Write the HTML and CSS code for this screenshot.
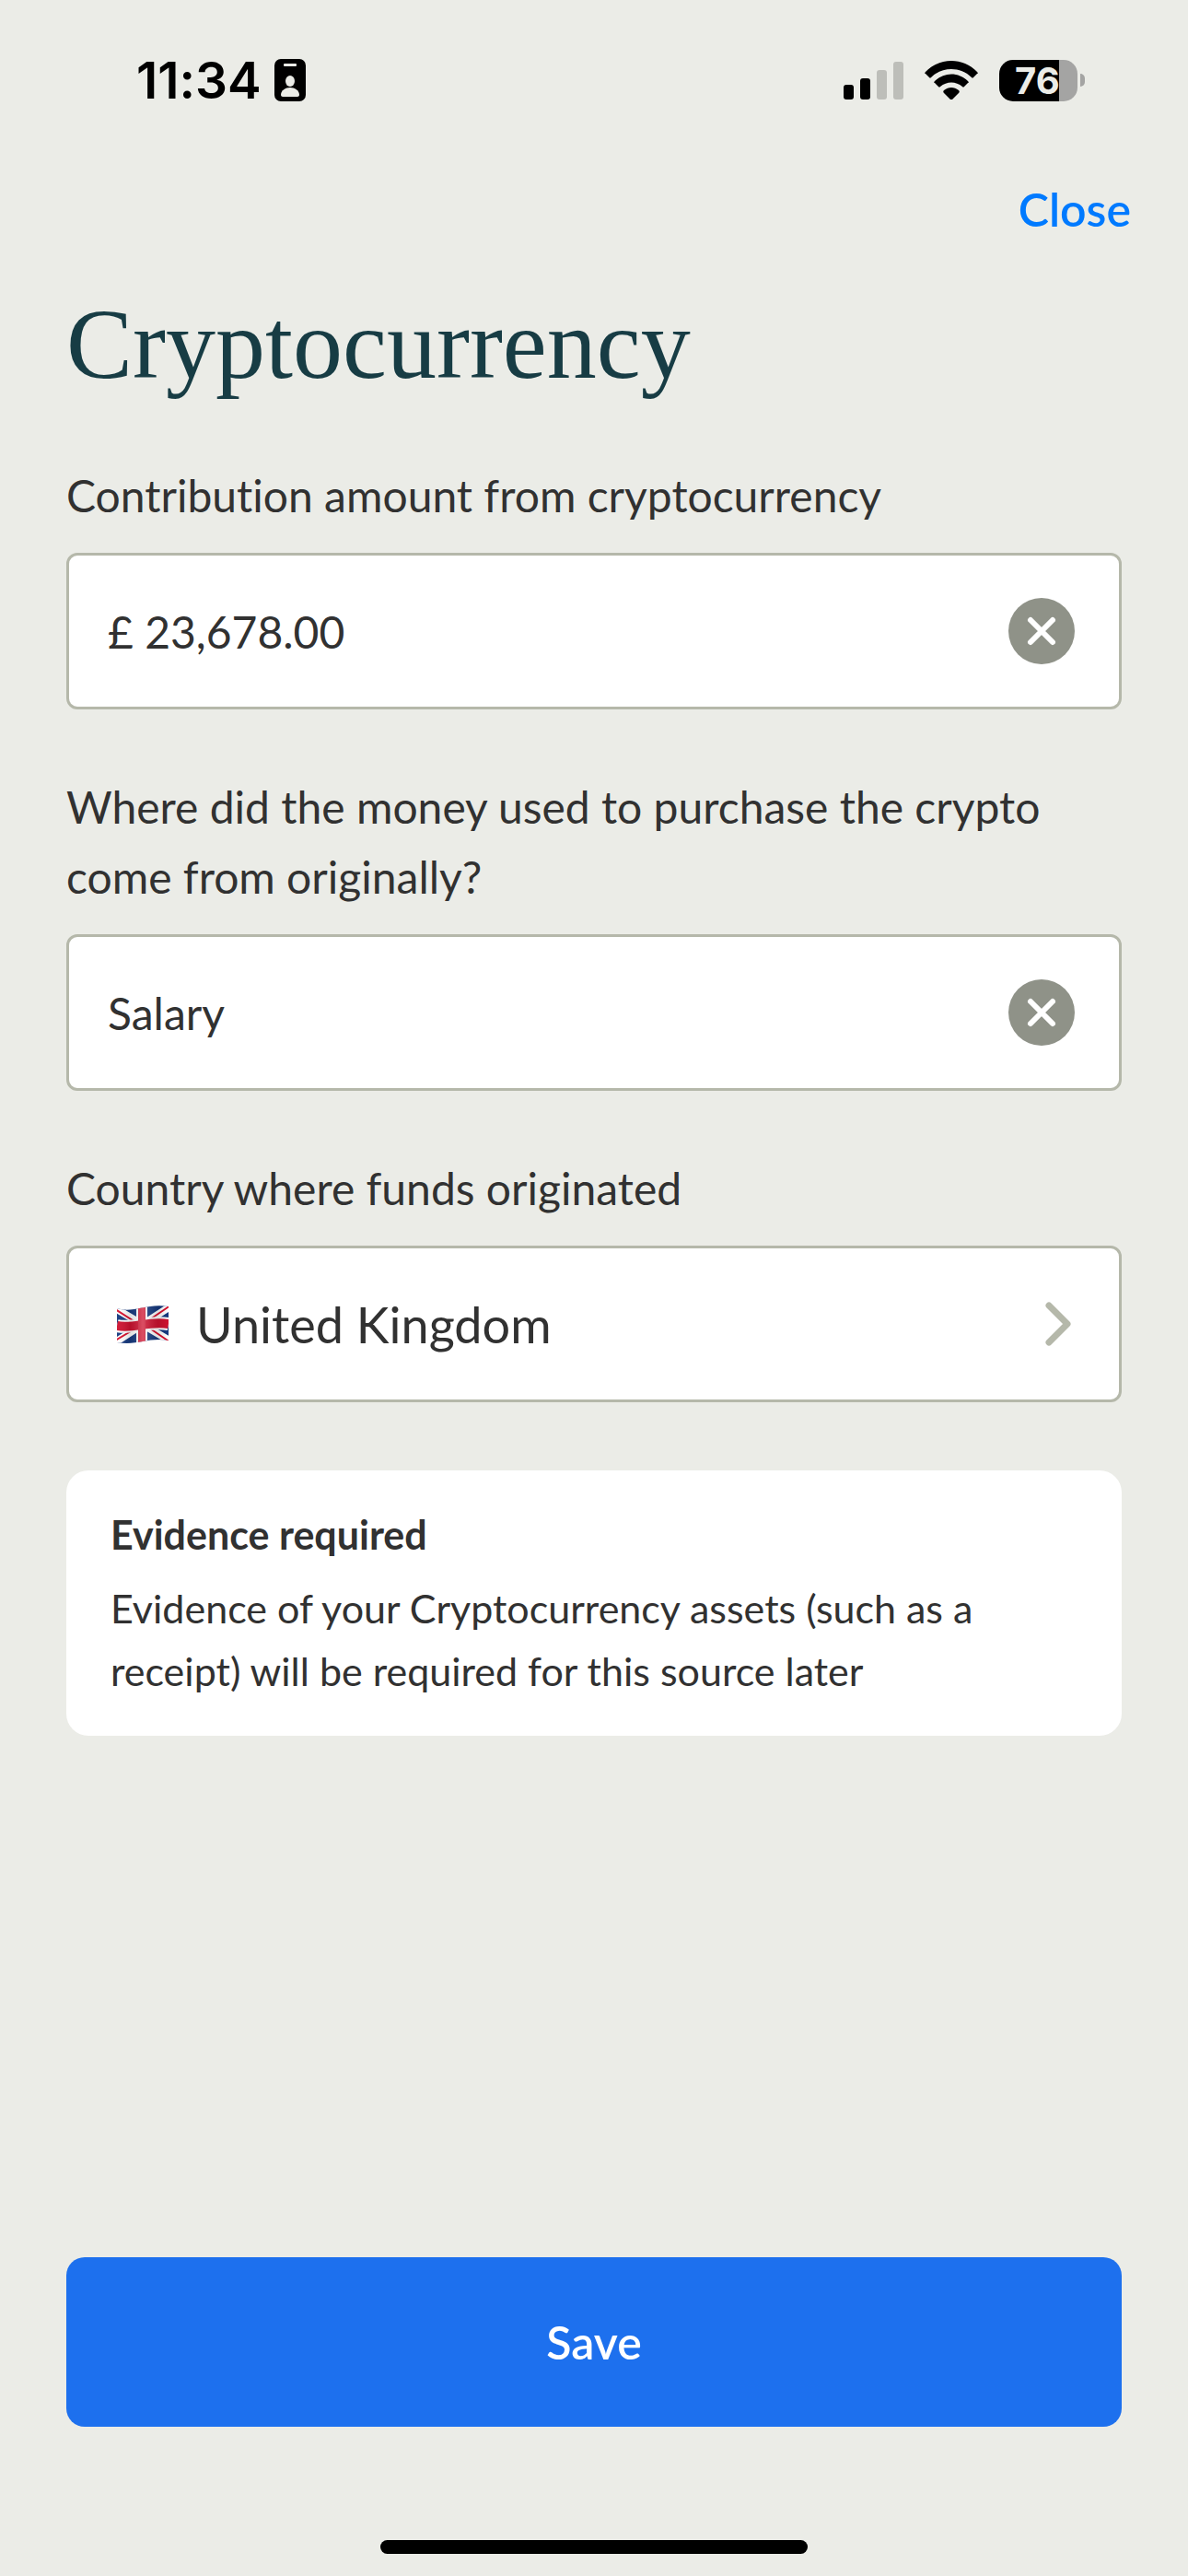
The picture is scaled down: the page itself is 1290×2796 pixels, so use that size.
FILE: index.html
```html
<!DOCTYPE html>
<html lang="en">
<head>
  <meta charset="UTF-8" />
  <title>Cryptocurrency</title>
  <meta name="viewport" content="width=device-width, initial-scale=1.0" />
  <link rel="stylesheet" href="styles.css">
</head>
<body>
  <div class="status-bar">
    <div class="status-left">
      <span class="time">11:34</span>
      <svg class="badge-icon" viewBox="0 0 34 46" aria-hidden="true">
        <rect width="34" height="46" rx="7" />
        <rect class="cutout" x="10" y="5" width="14" height="3" rx="1" />
        <ellipse class="cutout" cx="17" cy="24" rx="5" ry="6" />
        <path class="cutout" d="M7 39c0-5 5-8 10-8s10 3 10 8c0 1-1 2-2 2H9c-1 0-2-1-2-2z" />
      </svg>
    </div>
    <div class="status-right">
      <svg class="signal-icon" viewBox="0 0 65 41" aria-hidden="true">
        <rect x="0" y="25" width="11" height="16" rx="3" />
        <rect x="18" y="18" width="11" height="23" rx="3" />
        <rect class="weak" x="36" y="9" width="11" height="32" rx="3" />
        <rect class="weak" x="54" y="0" width="11" height="41" rx="3" />
      </svg>
      <svg class="wifi-icon" viewBox="0 0 58 42" aria-hidden="true">
        <path d="M1 12C16-4 42-4 57 12c1 1 1 2 0 2l-4 4c-1 1-1 1-2 0-12-12-32-12-44 0-1 1-1 1-2 0l-4-4c-1 0-1-1 0-2z" />
        <path d="M11 22c10-10 26-10 36 0 1 1 1 2 0 2l-4 4c-1 1-1 1-2 0-7-6-17-6-24 0-1 1-1 1-2 0l-4-4c-1 0-1-1 0-2z" />
        <path d="M21 32c5-4 11-4 16 0 1 1 1 2 0 3l-7 7c-1 1-1 1-2 0l-7-7c-1-1-1-2 0-3z" />
      </svg>
      <div class="battery">
        <span class="battery-body">76</span>
        <span class="battery-cap"></span>
      </div>
    </div>
  </div>

  <nav class="nav">
    <button type="button" class="close">Close</button>
  </nav>

  <form class="page">
    <h1>Cryptocurrency</h1>

    <div class="field">
      <label for="amount">Contribution amount from cryptocurrency</label>
      <div class="box">
        <input type="text" id="amount" value="£ 23,678.00" />
        <button type="button" class="clear" aria-label="Clear amount">
          <svg viewBox="0 0 72 72"><path d="M24 24l24 24M48 24L24 48" /></svg>
        </button>
      </div>
    </div>

    <div class="field">
      <label for="origin">Where did the money used to purchase the crypto come from originally?</label>
      <div class="box">
        <input type="text" id="origin" value="Salary" />
        <button type="button" class="clear" aria-label="Clear origin">
          <svg viewBox="0 0 72 72"><path d="M24 24l24 24M48 24L24 48" /></svg>
        </button>
      </div>
    </div>

    <div class="field">
      <label for="country">Country where funds originated</label>
      <button type="button" id="country" class="box country">
        <svg class="flag" viewBox="0 0 56 41" aria-hidden="true">
          <defs>
            <clipPath id="wave">
              <path d="M0 3C18 9 32-3 56 1V38C34 34 22 44 0 40z" />
            </clipPath>
            <linearGradient id="shade">
              <stop offset="0" stop-color="#fff" stop-opacity="0.05" />
              <stop offset="0.25" stop-color="#000" stop-opacity="0.12" />
              <stop offset="0.5" stop-color="#fff" stop-opacity="0.18" />
              <stop offset="0.8" stop-color="#000" stop-opacity="0.12" />
              <stop offset="1" stop-color="#000" stop-opacity="0" />
            </linearGradient>
          </defs>
          <g clip-path="url(#wave)">
            <rect width="56" height="41" fill="#15397f" />
            <path d="M-2 3L57 38M-2 40L58 1" stroke="#fff" stroke-width="8" />
            <path d="M-2 4L20 18M36 25L58 40M-2 38L20 25M36 15L58 0" stroke="#d80f2c" stroke-width="2" />
            <path d="M27 0V41" stroke="#fff" stroke-width="12" />
            <path d="M0 22C18 26 34 16 56 20" fill="none" stroke="#fff" stroke-width="14" />
            <path d="M0 22C18 26 34 16 56 20" fill="none" stroke="#ce1230" stroke-width="10" />
            <path d="M27 0V41" stroke="#d32640" stroke-width="8" />
            <rect width="56" height="41" fill="url(#shade)" />
          </g>
        </svg>
        <span class="country-name">United Kingdom</span>
        <svg class="chevron" viewBox="0 0 28 48" aria-hidden="true"><path d="M4 4l20 20L4 44" /></svg>
      </button>
    </div>

    <section class="notice">
      <h2>Evidence required</h2>
      <p>Evidence of your Cryptocurrency assets (such as a receipt) will be required for this source later</p>
    </section>

    <button type="submit" class="save">Save</button>
  </form>

  <div class="home-bar"></div>
</body>
</html>
```
FILE: styles.css
```css
* {
  box-sizing: border-box;
}

body {
  display: flex;
  flex-direction: column;
  min-height: 100vh;
  margin: 0;
  background: #ebece7;
  color: #313131;
  font-family: Lato, "Liberation Sans", sans-serif;
  font-size: 48px;
  font-variant-ligatures: none;
}

button,
input {
  margin: 0;
  padding: 0;
  border: 0;
  background: none;
  color: inherit;
  font: inherit;
}

svg {
  display: block;
  flex: none;
}

/* Status bar */
.status-bar {
  display: flex;
  justify-content: space-between;
  align-items: center;
  height: 172px;
  padding: 2px 112px 0 148px;
  color: #000;
  font-family: Inter, "Liberation Sans", sans-serif;
}

.status-left,
.status-right,
.battery {
  display: flex;
  align-items: center;
}

.status-left {
  gap: 14px;
}

.status-right {
  gap: 23px;
}

.time {
  font-size: 55px;
  font-weight: 600;
}

.badge-icon {
  width: 34px;
  height: 46px;
}

.cutout {
  fill: #ebece7;
}

.signal-icon {
  width: 65px;
  height: 41px;
}

.weak {
  fill: #bdbeb9;
}

.wifi-icon {
  width: 58px;
  height: 42px;
}

.battery {
  gap: 3px;
}

.battery-body {
  width: 85px;
  height: 45px;
  padding-left: 17px;
  border-radius: 15px;
  background: linear-gradient(to right, #000 65px, #a4a4a3 65px);
  color: #ebece7;
  font-size: 40px;
  font-weight: 700;
  line-height: 45px;
}

.battery-cap {
  width: 5px;
  height: 14px;
  border-radius: 0 5px 5px 0;
  background: #a4a4a3;
}

/* Navigation */
.nav {
  display: flex;
  justify-content: flex-end;
  padding: 0 62px;
}

.close {
  color: #007aff;
  font-size: 50px;
  font-weight: 600;
  line-height: 110px;
}

/* Form */
.page {
  display: flex;
  flex: 1;
  flex-direction: column;
  padding: 0 72px;
}

h1 {
  margin: 30px 0 64px;
  color: #173c44;
  font-family: "Liberation Serif", serif;
  font-size: 108px;
  font-weight: 400;
  line-height: 124px;
}

.field {
  margin-bottom: 68px;
}

.field label {
  display: block;
  margin-bottom: 24px;
  line-height: 76px;
}

.box {
  display: flex;
  align-items: center;
  width: 100%;
  height: 170px;
  padding: 0 48px 0 42px;
  border: 3px solid #b5b8aa;
  border-radius: 12px;
  background: #fff;
}

.box input {
  flex: 1;
  min-width: 0;
}

.clear {
  flex: none;
  width: 72px;
  height: 72px;
  border-radius: 50%;
  background: #8f9288;
}

.clear path {
  fill: none;
  stroke: #fff;
  stroke-width: 6;
  stroke-linecap: round;
}

.country {
  padding: 0 52px;
  font-size: 54px;
  text-align: left;
}

.flag {
  width: 56px;
  height: 41px;
}

.country-name {
  flex: 1;
  margin-left: 30px;
}

.chevron {
  width: 28px;
  height: 48px;
}

.chevron path {
  fill: none;
  stroke: #b5b8aa;
  stroke-width: 7;
  stroke-linecap: round;
  stroke-linejoin: round;
}

.notice {
  margin-top: 6px;
  padding: 36px 48px;
  border-radius: 24px;
  background: #fff;
  font-size: 43px;
  line-height: 68px;
}

.notice h2 {
  margin: 0 0 12px;
  font-size: 43px;
  font-weight: 700;
}

.notice p {
  margin: 0;
}

.save {
  height: 184px;
  margin-top: auto;
  border-radius: 20px;
  background: #1d70ee;
  color: #fff;
  font-size: 50px;
  font-weight: 600;
}

.home-bar {
  align-self: center;
  width: 36%;
  height: 15px;
  margin: 123px 0 24px;
  border-radius: 8px;
  background: #000;
}
```
